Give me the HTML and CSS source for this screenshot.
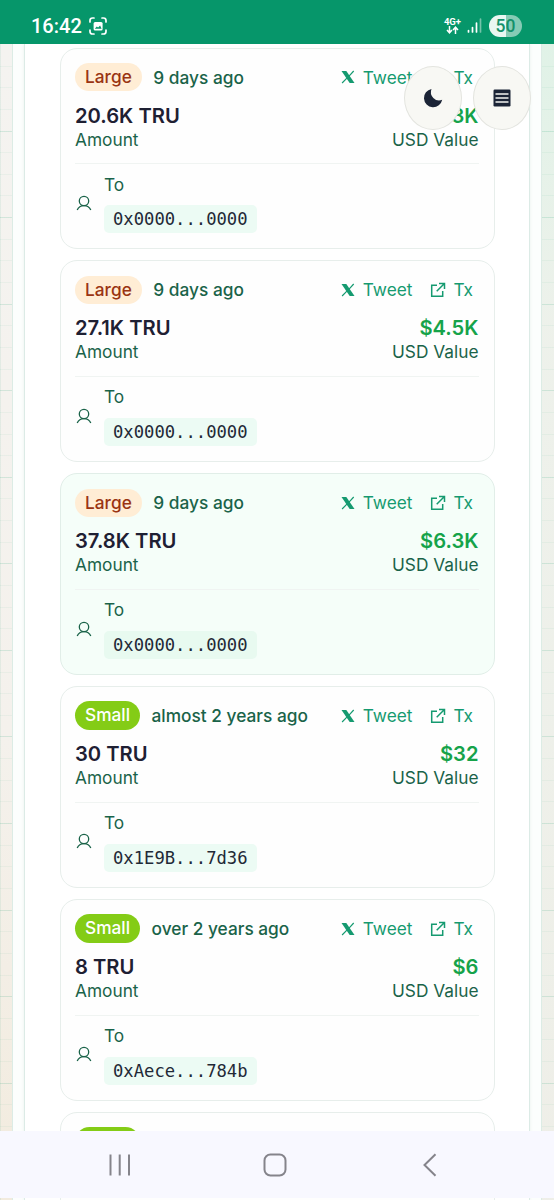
FILE: index.html
```html
<!DOCTYPE html>
<html lang="en">
<head>
  <meta charset="UTF-8">
  <title>TRU transfers</title>
  <link rel="stylesheet" href="styles.css">
</head>
<body>

  <svg class="symbols" width="0" height="0">
    <symbol id="icon-x" viewBox="0 0 14 14">
      <path d="M.5 1h4.800l8.200 12H8.700z" fill="currentColor"/>
      <path d="M12.700 1 7.800 6.300M5.900 8.200 1.100 13" fill="none" stroke="currentColor" stroke-width="1.200"/>
    </symbol>
    <symbol id="icon-link" viewBox="0 0 16 16">
      <path d="M7 3.200H1.700v11h11V9M9 1.500h5.500V7M14.200 1.800 6.700 9.300" fill="none" stroke="currentColor" stroke-width="1.500"/>
    </symbol>
    <symbol id="icon-user" viewBox="0 0 16 16">
      <circle cx="8" cy="6" r="4.700" fill="none" stroke="currentColor" stroke-width="1.300"/>
      <path d="M1.200 15C2.400 12.300 5 10.700 8 10.700s5.600 1.600 6.800 4.300" fill="none" stroke="currentColor" stroke-width="1.300"/>
    </symbol>
  </svg>

  <header class="status-bar">
    <span class="clock">16:42</span>
    <svg class="capture" width="18" height="18" viewBox="0 0 18 18">
      <path d="M1 5V3.500Q1 1 3.500 1H5M13 1h1.500Q17 1 17 3.500V5M17 13v1.500Q17 17 14.500 17H13M5 17H3.500Q1 17 1 14.500V13" fill="none" stroke="#fff" stroke-width="1.700" stroke-linecap="round"/>
      <rect x="4.600" y="5" width="9" height="8.500" rx="1.500" fill="#fff"/>
      <path d="m5.800 11.800 2-2.200 1.300 1 2-2 1.500 3.200z" fill="#06966a"/>
    </svg>
    <div class="network">
      <span>4G+</span>
      <svg width="13" height="8" viewBox="0 0 13 8">
        <path d="M3.500 0v6.500M1 4l2.500 2.800L6 4M9.500 8V1.200M7 4l2.500-2.800L12 4" fill="none" stroke="#fff" stroke-width="1.500"/>
      </svg>
    </div>
    <svg class="signal" width="15" height="15" viewBox="0 0 15 15">
      <path d="M1.500 14v-1.500M5.500 14V9.500M9.500 14V5" stroke="#fff" stroke-width="1.700" stroke-linecap="round"/>
      <path d="M13.500 14V1" stroke="#75c3aa" stroke-width="1.700" stroke-linecap="round"/>
    </svg>
    <span class="battery">50</span>
  </header>

  <main class="page">
    <div class="shell">
      <div class="panel">

        <article class="card">
          <div class="card-head">
            <span class="badge large">Large</span>
            <span class="time">9 days ago</span>
            <a class="tweet"><svg class="ico-x"><use href="#icon-x"/></svg>Tweet</a>
            <a class="tx"><svg class="ico-link"><use href="#icon-link"/></svg>Tx</a>
          </div>
          <div class="values">
            <div><strong>20.6K TRU</strong><span>Amount</span></div>
            <div class="usd"><strong>$3.3K</strong><span>USD Value</span></div>
          </div>
          <div class="address">
            <svg class="ico-user"><use href="#icon-user"/></svg>
            <div><span>To</span><code>0x0000...0000</code></div>
          </div>
        </article>

        <article class="card">
          <div class="card-head">
            <span class="badge large">Large</span>
            <span class="time">9 days ago</span>
            <a class="tweet"><svg class="ico-x"><use href="#icon-x"/></svg>Tweet</a>
            <a class="tx"><svg class="ico-link"><use href="#icon-link"/></svg>Tx</a>
          </div>
          <div class="values">
            <div><strong>27.1K TRU</strong><span>Amount</span></div>
            <div class="usd"><strong>$4.5K</strong><span>USD Value</span></div>
          </div>
          <div class="address">
            <svg class="ico-user"><use href="#icon-user"/></svg>
            <div><span>To</span><code>0x0000...0000</code></div>
          </div>
        </article>

        <article class="card active">
          <div class="card-head">
            <span class="badge large">Large</span>
            <span class="time">9 days ago</span>
            <a class="tweet"><svg class="ico-x"><use href="#icon-x"/></svg>Tweet</a>
            <a class="tx"><svg class="ico-link"><use href="#icon-link"/></svg>Tx</a>
          </div>
          <div class="values">
            <div><strong>37.8K TRU</strong><span>Amount</span></div>
            <div class="usd"><strong>$6.3K</strong><span>USD Value</span></div>
          </div>
          <div class="address">
            <svg class="ico-user"><use href="#icon-user"/></svg>
            <div><span>To</span><code>0x0000...0000</code></div>
          </div>
        </article>

        <article class="card">
          <div class="card-head">
            <span class="badge small">Small</span>
            <span class="time">almost 2 years ago</span>
            <a class="tweet"><svg class="ico-x"><use href="#icon-x"/></svg>Tweet</a>
            <a class="tx"><svg class="ico-link"><use href="#icon-link"/></svg>Tx</a>
          </div>
          <div class="values">
            <div><strong>30 TRU</strong><span>Amount</span></div>
            <div class="usd"><strong>$32</strong><span>USD Value</span></div>
          </div>
          <div class="address">
            <svg class="ico-user"><use href="#icon-user"/></svg>
            <div><span>To</span><code>0x1E9B...7d36</code></div>
          </div>
        </article>

        <article class="card">
          <div class="card-head">
            <span class="badge small">Small</span>
            <span class="time">over 2 years ago</span>
            <a class="tweet"><svg class="ico-x"><use href="#icon-x"/></svg>Tweet</a>
            <a class="tx"><svg class="ico-link"><use href="#icon-link"/></svg>Tx</a>
          </div>
          <div class="values">
            <div><strong>8 TRU</strong><span>Amount</span></div>
            <div class="usd"><strong>$6</strong><span>USD Value</span></div>
          </div>
          <div class="address">
            <svg class="ico-user"><use href="#icon-user"/></svg>
            <div><span>To</span><code>0xAece...784b</code></div>
          </div>
        </article>

        <article class="card">
          <div class="card-head">
            <span class="badge small"></span>
          </div>
        </article>

      </div>
    </div>
  </main>

  <div class="floating">
    <button aria-label="Dark mode">
      <svg width="20" height="20" viewBox="0 0 20 20">
        <path d="M8.500 1A9.200 9.200 0 1 0 19.200 11.800 8.300 8.300 0 0 1 8.500 1z" fill="#1b2436"/>
      </svg>
    </button>
    <button aria-label="Menu">
      <svg width="18" height="18" viewBox="0 0 18 18">
        <rect x=".5" y=".5" width="17" height="17" rx="1.200" fill="#1b2436"/>
        <path d="M2.500 5h13M2.500 9h13M2.500 13h13" stroke="#f3f4f1" stroke-width="1.500"/>
      </svg>
    </button>
  </div>

  <nav class="nav-bar">
    <svg width="24" height="24" viewBox="0 0 24 24">
      <path d="M2.500 1.500v21M11.700 1.500v21M21 1.500v21" stroke="#85848b" stroke-width="2"/>
    </svg>
    <svg width="24" height="24" viewBox="0 0 24 24">
      <rect x="1.500" y="1.500" width="21" height="21" rx="6" fill="none" stroke="#85848b" stroke-width="2"/>
    </svg>
    <svg width="24" height="24" viewBox="0 0 24 24">
      <path d="M17.500 1.200 6.500 12l11 10.800" fill="none" stroke="#85848b" stroke-width="2"/>
    </svg>
  </nav>

</body>
</html>
```

FILE: styles.css
```css
* {
  box-sizing: border-box;
}

body {
  position: relative;
  width: 554px;
  height: 1200px;
  margin: 0;
  overflow: hidden;
  font-family: Inter, sans-serif;
  font-size: 17.3px;
  color: #1a6349;
}

.symbols {
  position: absolute;
}

.status-bar {
  display: flex;
  align-items: center;
  height: 44px;
  padding: 7px 32px 0 31px;
  background: #06966a;
  color: #fff;
}

.clock {
  width: 58px;
  font: 500 20px Roboto, sans-serif;
}

.network {
  display: flex;
  flex-direction: column;
  align-items: center;
  margin-left: auto;
  font: 700 9.5px/9px Roboto, sans-serif;
}

.signal {
  margin: 0 7px 0 6px;
}

.battery {
  width: 33px;
  height: 22px;
  border-radius: 11px;
  background: linear-gradient(90deg, #e9f7f2 50%, #86cbb5 50%);
  color: #14916a;
  font: 500 17.5px/23px Roboto, sans-serif;
  text-align: center;
}

.page {
  height: 1156px;
  padding: 0 12px;
  overflow: hidden;
  background:
    repeating-linear-gradient(180deg, transparent 0 85.56px, rgba(16, 150, 105, .1) 85.56px 86.56px) 0 1px,
    repeating-linear-gradient(180deg, transparent 0 20.64px, rgba(16, 150, 105, .05) 20.64px 21.64px) 0 1px,
    linear-gradient(90deg, rgba(16, 150, 105, .08) 0 1px, transparent 1px),
    linear-gradient(180deg, rgba(222, 242, 230, .9), rgba(236, 241, 234, .8) 25%, rgba(238, 239, 233, .9)) 100% 0 / 50% 100% no-repeat,
    linear-gradient(180deg, #f4f3f0, #f4f1ec 60%, #f2ebde);
}

.shell {
  height: 100%;
  padding: 0 11px;
  border: solid #dcece5;
  border-width: 0 1px;
  background: #fcfefd;
}

.panel {
  height: 100%;
  padding: 3.5px 34.5px 0 35px;
  border: solid #dcebe6;
  border-width: 0 1px;
  background: #fff;
  box-shadow: 0 0 3px rgba(6, 95, 70, .08);
}

.card {
  height: 201.5px;
  margin-bottom: 11.4px;
  padding: 14.5px 15px 14.5px 14px;
  border: 1px solid #e7eeeb;
  border-radius: 17px;
  background: #fefefe;
}

.card.active {
  background: #f5fef9;
  border-color: #e1eee8;
}

.card-head {
  display: flex;
  align-items: center;
  height: 28px;
}

.badge {
  min-width: 65px;
  height: 28.5px;
  margin-right: 11.5px;
  padding: 0 10px;
  border-radius: 15px;
  font-weight: 500;
  line-height: 28px;
}

.badge.large {
  background: #ffedd5;
  color: #9a3412;
}

.badge.small {
  background: #84cc16;
  color: #fff;
}

.time {
  font-weight: 500;
}

.tweet,
.tx {
  display: flex;
  align-items: center;
  color: #159a70;
}

.tweet {
  margin-left: auto;
}

.tx {
  margin: 0 5.5px 0 18px;
}

.ico-x {
  width: 14px;
  height: 14px;
  margin-right: 8px;
}

.ico-link {
  width: 16px;
  height: 16px;
  margin-right: 7px;
}

.values {
  display: flex;
  justify-content: space-between;
  height: 73px;
  padding-top: 12.5px;
  border-bottom: 1px solid #f0f4f2;
}

.values strong,
.values span {
  display: block;
  line-height: 24px;
}

.values strong {
  color: #1e2033;
  font-size: 20.2px;
  font-weight: 600;
}

.values .usd {
  text-align: right;
}

.usd strong {
  color: #16a34a;
}

.address {
  display: flex;
  align-items: center;
  padding-top: 8.5px;
}

.address span {
  display: block;
  height: 32.5px;
  line-height: 24px;
}

.ico-user {
  width: 16px;
  height: 16px;
  margin: 0 12px 0 1px;
}

code {
  display: block;
  width: 153px;
  height: 28px;
  padding-left: 9px;
  border-radius: 5px;
  background: #ecfbf4;
  color: #1f2937;
  font: 17.2px/28px "DejaVu Sans Mono", monospace;
}

.active code {
  background: #e8faf0;
}

.floating {
  position: absolute;
  top: 66px;
  left: 404px;
  display: flex;
  gap: 11px;
}

.floating button {
  display: flex;
  align-items: center;
  justify-content: center;
  width: 58px;
  height: 64px;
  padding: 0;
  border: 1px solid #e3e4df;
  border-radius: 50%;
  background: #f8f8f4;
}

.nav-bar {
  position: absolute;
  bottom: 2px;
  left: 0;
  display: flex;
  align-items: center;
  justify-content: space-between;
  width: 100%;
  height: 67px;
  padding: 1px 112px 0 108px;
  background: #f8f8ff;
}
```
